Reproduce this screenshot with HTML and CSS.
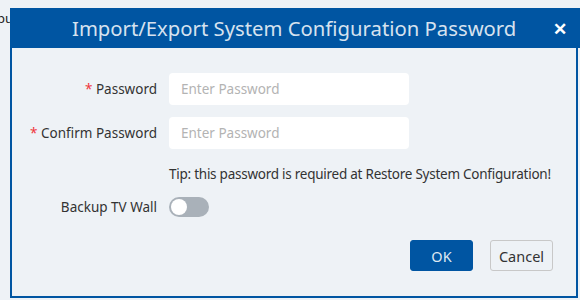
FILE: index.html
```html
<!DOCTYPE html>
<html>
<head>
  <meta charset="UTF-8">
  <title>Import/Export System Configuration Password</title>
  <link rel="stylesheet" href="styles.css">
</head>
<body>
  <div class="page-text">Output</div>

  <div class="dialog" role="dialog">
    <div class="dialog-head">
      <span class="dialog-title">Import/Export System Configuration Password</span>
      <span class="dialog-close">&#x2715;</span>
    </div>
    <div class="dialog-body">
      <div class="form">
        <label class="label"><span class="req">*</span> Password</label>
        <input class="field" type="password" placeholder="Enter Password">

        <label class="label"><span class="req">*</span> Confirm Password</label>
        <input class="field" type="password" placeholder="Enter Password">

        <span></span>
        <div class="tip">Tip: this password is required at Restore System Configuration!</div>

        <label class="label">Backup TV Wall</label>
        <div class="switch"><span class="knob"></span></div>
      </div>
      <div class="actions">
        <button class="btn btn-primary">OK</button>
        <button class="btn">Cancel</button>
      </div>
    </div>
  </div>
</body>
</html>
```

FILE: styles.css
```css
body { margin: 0; background: #eef2f6; font-family: 'Noto Sans', 'Open Sans', sans-serif; color: #333; }
.page-text { font-size: 13px; margin: 9px 0 0 -26px; color: #222; }

/* --- DIALOG --- */
.dialog {
  position: absolute;
  left: 10px;
  top: 8px;
  width: 570px;
}
.dialog-head {
  background: #0055a2;
  height: 40px;
  display: flex;
  align-items: center;
  padding: 0 13px 0 62px;
}
.dialog-title {
  flex: 1;
  color: #d6e2ef;
  font-size: 20.3px;
}
.dialog-close {
  color: #fff;
  font-size: 17px;
  font-weight: bold;
}
.dialog-body {
  width: 564px;
  height: 223px;
  border: 2px solid #0055a2;
  border-top: none;
  background: #eef2f6;
  padding-top: 25px;
  box-sizing: content-box;
}
.form {
  display: grid;
  grid-template-columns: 145px 1fr;
  column-gap: 12px;
  row-gap: 12px;
  align-items: center;
}
.label { text-align: right; font-size: 13.5px; color: #333; white-space: nowrap; }
.req { color: #f0353b; }
.field {
  width: 240px;
  height: 32px;
  box-sizing: border-box;
  border: none;
  border-radius: 4px;
  background: #fff;
  padding: 0 12px;
  font: inherit;
  font-size: 13.5px;
}
.field::placeholder { color: #b3b3b3; }
.tip {
  font-size: 13.5px;
  line-height: 20px;
  letter-spacing: -0.25px;
  color: #333;
  padding: 3px 0 1px;
  white-space: nowrap;
}
.switch {
  width: 40px;
  height: 20px;
  border-radius: 10px;
  background: #a9b1b9;
  display: flex;
  align-items: center;
  padding: 0 2px;
  box-sizing: border-box;
}
.knob { width: 16px; height: 16px; border-radius: 50%; background: #fff; }
.actions {
  display: flex;
  justify-content: flex-end;
  gap: 17px;
  padding: 23px 23px 0 0;
}
.btn {
  width: 63px;
  height: 31px;
  border: 1px solid #c8c8c8;
  border-radius: 3px;
  background: #eef2f6;
  color: #333;
  font: inherit;
  font-size: 14.5px;
}
.btn-primary { background: #0055a2; border-color: #0055a2; color: #dfe8f2; }
```
